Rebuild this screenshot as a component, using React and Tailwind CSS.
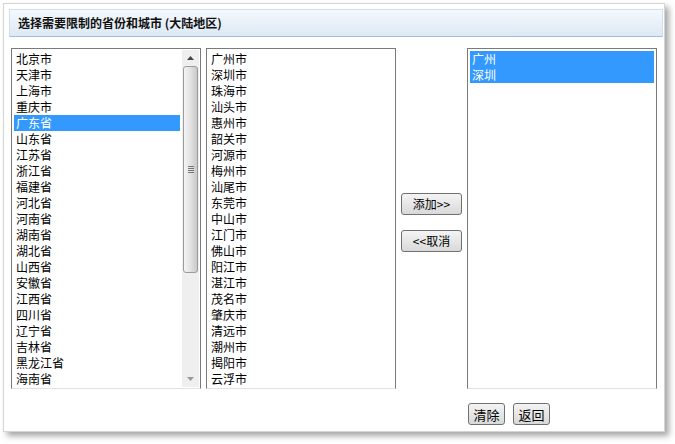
const provinces = [
  '北京市', '天津市', '上海市', '重庆市', '广东省', '山东省', '江苏省', '浙江省', '福建省', '河北省', '河南省',
  '湖南省', '湖北省', '山西省', '安徽省', '江西省', '四川省', '辽宁省', '吉林省', '黑龙江省', '海南省',
]

const cities = [
  '广州市', '深圳市', '珠海市', '汕头市', '惠州市', '韶关市', '河源市', '梅州市', '汕尾市', '东莞市', '中山市',
  '江门市', '佛山市', '阳江市', '湛江市', '茂名市', '肇庆市', '清远市', '潮州市', '揭阳市', '云浮市',
]

const chosen = ['广州', '深圳']

function ListBox({ items, selected = [], width, children }) {
  return (
    <div
      className={`flex h-[341px] border border-[#7a7a7a] border-b-[#e2e2e2] bg-white ${width}`}
    >
      <div className="flex-1 overflow-hidden px-[2px] pt-[2px]">
        {items.map(item => (
          <div
            key={item}
            className={`h-4 pl-[2px] text-[12px] leading-4 whitespace-nowrap ${
              selected.includes(item) ? 'bg-[#3399ff] text-white' : 'text-black'
            }`}
          >
            {item}
          </div>
        ))}
      </div>
      {children}
    </div>
  )
}

function ScrollBar() {
  return (
    <div className="my-px mr-px flex w-[17px] flex-col bg-[#efefef]">
      <div className="flex h-4 items-center justify-center">
        <svg width="7" height="4" viewBox="0 0 7 4">
          <path d="M0 4 L3.5 0 L7 4 Z" fill="#444" />
        </svg>
      </div>
      <div className="mx-px flex h-[207px] items-center justify-center rounded-[3px] border border-[#9c9c9c] bg-gradient-to-r from-[#f4f4f4] via-[#e2e2e2] to-[#c9c9c9]">
        <div className="flex flex-col gap-px">
          <div className="h-px w-[6px] bg-[#777]" />
          <div className="h-px w-[6px] bg-[#777]" />
          <div className="h-px w-[6px] bg-[#777]" />
          <div className="h-px w-[6px] bg-[#777]" />
        </div>
      </div>
      <div className="flex-1" />
      <div className="flex h-4 items-center justify-center">
        <svg width="7" height="4" viewBox="0 0 7 4">
          <path d="M0 0 L7 0 L3.5 4 Z" fill="#9a9a9a" />
        </svg>
      </div>
    </div>
  )
}

function Btn({ children, className = '' }) {
  return (
    <button
      className={`h-[22px] rounded-[3px] border border-[#707070] bg-gradient-to-b from-[#f4f4f4] to-[#d9d9d9] leading-none text-black ${className}`}
    >
      {children}
    </button>
  )
}

export default function App() {
  return (
    <div
      className="h-[444px] w-[675px] bg-white pl-[3px] pt-[3px]"
      style={{ fontFamily: '"Noto Sans CJK SC", "DejaVu Sans", sans-serif' }}
    >
      <div className="h-[429px] w-[662px] border border-[#d4d4d4] bg-white pl-[5px] pr-px pt-[5px] shadow-[4px_4px_6px_rgba(0,0,0,0.35)]">
        <div className="flex h-[28px] items-center border border-[#cfdff0] border-b-[#9dbfe2] bg-gradient-to-b from-[#f4f8fc] to-[#dde9f5] pl-[8px] text-[12px] font-bold text-[#111]">
          选择需要限制的省份和城市 (大陆地区)
        </div>

        <div className="mt-[11px] flex gap-[5px] pl-[2px]">
          <ListBox items={provinces} selected={['广东省']} width="w-[190px]">
            <ScrollBar />
          </ListBox>
          <ListBox items={cities} width="w-[190px]" />

          <div className="flex w-[61px] flex-col gap-[15px] pt-[145px]">
            <Btn className="w-[61px] text-[12px]">添加&gt;&gt;</Btn>
            <Btn className="w-[61px] text-[12px]">&lt;&lt;取消</Btn>
          </div>

          <div className="flex flex-col">
            <ListBox items={chosen} selected={chosen} width="w-[190px]" />
            <div className="mt-[14px] flex gap-[8px] pl-px">
              <Btn className="w-[37px] text-[13px]">清除</Btn>
              <Btn className="w-[37px] text-[13px]">返回</Btn>
            </div>
          </div>
        </div>
      </div>
    </div>
  )
}
